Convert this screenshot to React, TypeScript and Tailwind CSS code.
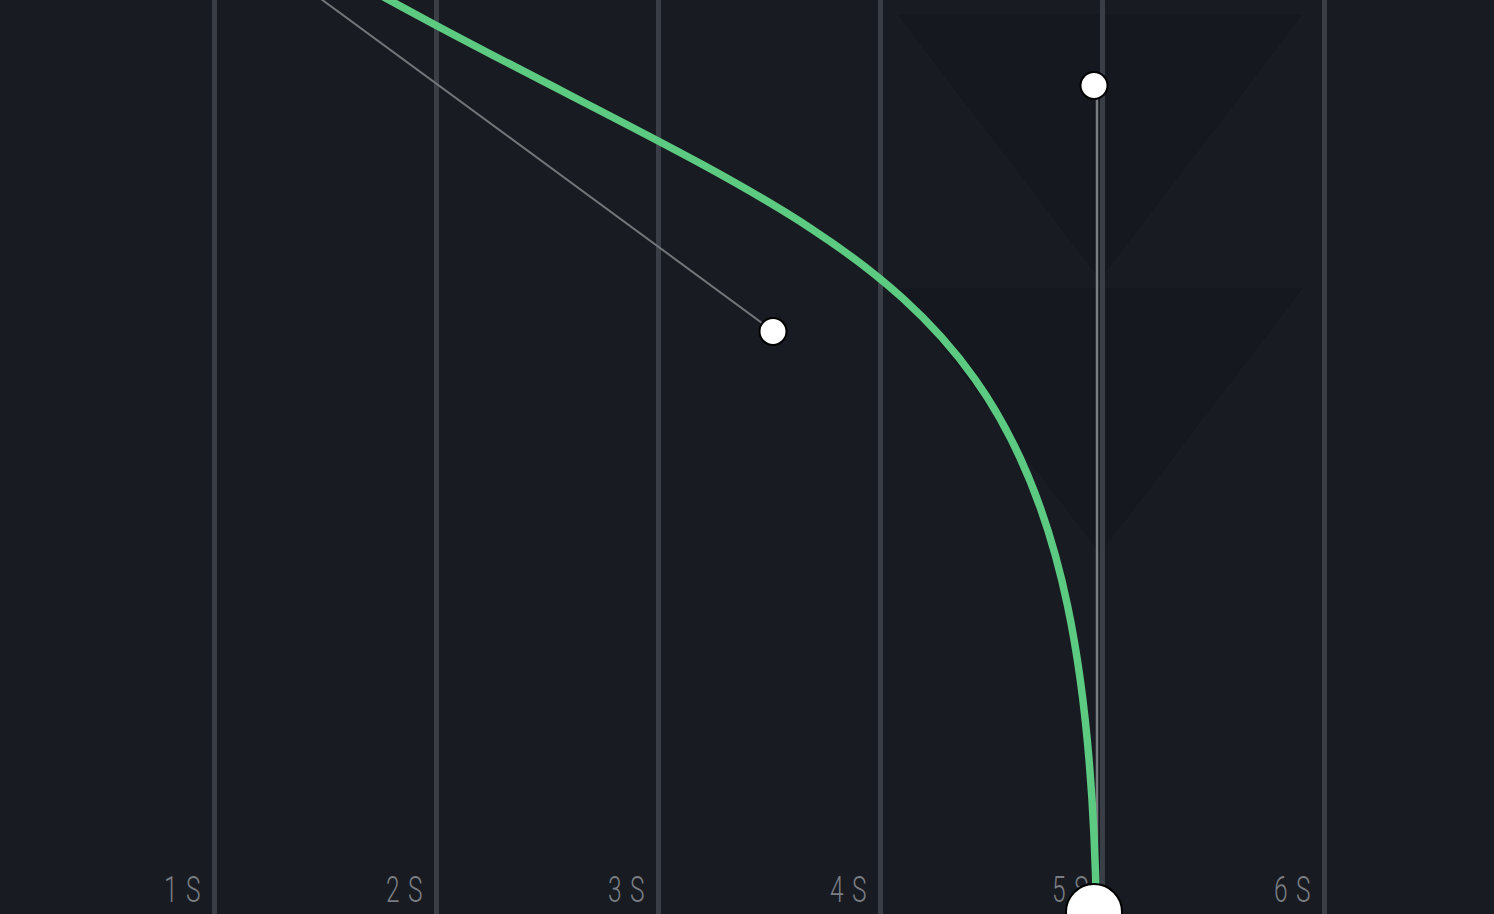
import React from "react";

const ticks = ["1S", "2S", "3S", "4S", "5S", "6S"];

// easing curve: start off-canvas top-left, two handles, end below the bottom edge
const p0 = { x: -103.6, y: -312.9 };
const p1 = { x: 773, y: 331 };
const p2 = { x: 1097, y: 85 };
const p3 = { x: 1097, y: 970 };

const Watermark = () => (
  <svg className="absolute inset-0 h-full w-full" viewBox="0 0 1494 914">
    <polygon points="895,13 1305,13 1100,281" fill="#15181e" stroke="#1c1f25" strokeWidth="1" />
    <polygon points="895,287 1305,287 1100,555" fill="#15181e" stroke="#1c1f25" strokeWidth="1" />
  </svg>
);

const Curve = () => (
  <svg className="absolute inset-0 h-full w-full" viewBox="0 0 1494 914">
    <line x1={p0.x} y1={p0.y} x2={p1.x} y2={p1.y} stroke="#737579" strokeWidth="2" />
    <line x1={p2.x} y1={p2.y} x2={p3.x} y2={p3.y} stroke="#7a7c80" strokeWidth="2.5" />
    <path
      d={`M ${p0.x} ${p0.y} C ${p1.x} ${p1.y}, ${p2.x} ${p2.y}, ${p3.x} ${p3.y}`}
      fill="none"
      stroke="#5cca80"
      strokeWidth="7.5"
    />
    <circle cx="773" cy="331.5" r="13.5" fill="#ffffff" stroke="#000000" strokeWidth="2" />
    <circle cx="1094" cy="85.5" r="13.5" fill="#ffffff" stroke="#000000" strokeWidth="2" />
    <circle cx="1094" cy="912" r="28" fill="#ffffff" stroke="#000000" strokeWidth="2" />
  </svg>
);

export default function App() {
  return (
    <div className="relative h-[914px] w-full overflow-hidden bg-[#181b21]">
      <Watermark />
      <div className="relative -ml-[5px] flex h-full">
        {ticks.map((t) => (
          <div
            key={t}
            className="flex h-full w-[222px] shrink-0 items-end justify-end border-r-[5px] border-[#3a3e46] pb-[6px] pr-[3px]"
          >
            <span className="origin-right scale-x-[0.68] font-['Roboto',sans-serif] text-[36px] font-light leading-none tracking-[0.34em] text-[#7a7e84]">
              {t}
            </span>
          </div>
        ))}
        <div className="h-full flex-1" />
      </div>
      <Curve />
    </div>
  );
}
